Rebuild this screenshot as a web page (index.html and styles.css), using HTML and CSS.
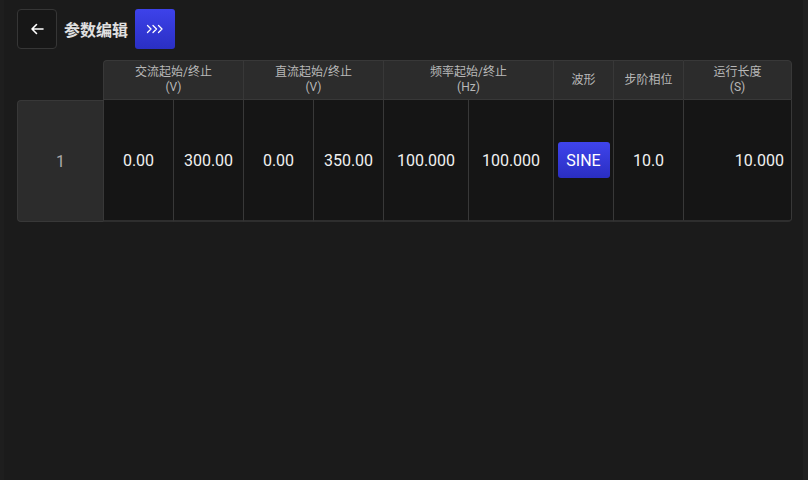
FILE: index.html
```html
<!DOCTYPE html>
<html lang="zh">
<head>
    <meta charset="UTF-8">
    <meta name="viewport" content="width=device-width, initial-scale=1.0">
    <title>参数编辑</title>
    <link rel="stylesheet" href="styles.css">
</head>
<body>
    <div class="page">
        <div class="toolbar">
            <button class="back-btn">
                <svg width="14" height="12" viewBox="0 0 14 12">
                    <path d="M13 6H2M6.5 1.5L2 6l4.5 4.5" fill="none" stroke="#fff" stroke-width="1.6" stroke-linecap="round" stroke-linejoin="round"/>
                </svg>
            </button>
            <span class="title">参数编辑</span>
            <button class="more-btn">
                <svg width="18" height="10" viewBox="0 0 18 10">
                    <path d="M1.5 1.5L5 5l-3.5 3.5M7 1.5L10.5 5 7 8.5M12.5 1.5L16 5l-3.5 3.5" fill="none" stroke="#fff" stroke-width="1.3" stroke-linecap="round" stroke-linejoin="round"/>
                </svg>
            </button>
        </div>

        <div class="grid">
            <div class="corner"></div>
            <div class="head first span2">交流起始/终止<br>(V)</div>
            <div class="head span2">直流起始/终止<br>(V)</div>
            <div class="head span2">频率起始/终止<br>(Hz)</div>
            <div class="head">波形</div>
            <div class="head">步阶相位</div>
            <div class="head last">运行长度<br>(S)</div>

            <div class="row-num">1</div>
            <div class="cell">0.00</div>
            <div class="cell">300.00</div>
            <div class="cell">0.00</div>
            <div class="cell">350.00</div>
            <div class="cell">100.000</div>
            <div class="cell">100.000</div>
            <div class="cell"><button class="wave-btn">SINE</button></div>
            <div class="cell">10.0</div>
            <div class="cell right last">10.000</div>
        </div>
    </div>
</body>
</html>
```

FILE: styles.css
```css
body {
    margin: 0;
    background: #1b1b1b;
    font-family: Roboto, "Noto Sans CJK SC", sans-serif;
    color: #eee;
}

.page {
    height: 480px;
    box-sizing: border-box;
    padding: 9px 11px 0 13px;
    border-left: 4px solid #1e1e1e;
    border-right: 5px solid #202020;
}

.toolbar {
    display: flex;
    align-items: center;
    height: 40px;
}

button {
    font-family: inherit;
    cursor: pointer;
}

.back-btn {
    width: 40px;
    height: 40px;
    display: flex;
    align-items: center;
    justify-content: center;
    background: #171717;
    border: 1px solid #363636;
    border-radius: 4px;
    padding: 0;
}

.title {
    margin-left: 7px;
    font-size: 16px;
    font-weight: 700;
    color: #e0e0e0;
}

.more-btn {
    width: 40px;
    height: 40px;
    margin-left: 7px;
    display: flex;
    align-items: center;
    justify-content: center;
    background: linear-gradient(180deg, #3d42ea, #2a2fc4);
    border: none;
    border-radius: 3px;
    padding: 0;
}

.grid {
    margin-top: 11px;
    display: grid;
    grid-template-columns: 86px 70px 70px 70px 70px 85px 85px 60px 70px 109px;
    grid-template-rows: 40px 122px;
}

.head {
    background: #2c2c2c;
    border-top: 1px solid #383838;
    border-left: 1px solid #383838;
    border-bottom: 1px solid #383838;
    display: flex;
    flex-direction: column;
    align-items: center;
    justify-content: center;
    text-align: center;
    font-size: 12px;
    line-height: 15px;
    color: #b8b8b8;
}

.span2 {
    grid-column: span 2;
}

.head.first {
    border-top-left-radius: 4px;
}

.head.last {
    border-right: 1px solid #383838;
    border-top-right-radius: 4px;
}

.row-num {
    background: #2c2c2c;
    border: 1px solid #383838;
    border-right: none;
    border-radius: 4px 0 0 4px;
    display: flex;
    align-items: center;
    justify-content: center;
    font-size: 16px;
    color: #aaa;
}

.cell {
    background: #151515;
    border-left: 1px solid #383838;
    border-bottom: 2px solid #2e2e2e;
    display: flex;
    align-items: center;
    justify-content: center;
    font-size: 16px;
    color: #f0f0f0;
}

.cell.right {
    justify-content: flex-end;
    padding-right: 7px;
}

.cell.last {
    border-right: 1px solid #383838;
    border-bottom-right-radius: 4px;
}

.wave-btn {
    width: 52px;
    height: 36px;
    background: linear-gradient(180deg, #3f44ec, #2a2ec2);
    border: none;
    border-radius: 3px;
    color: #fff;
    font-size: 16px;
    padding: 0;
}
```
